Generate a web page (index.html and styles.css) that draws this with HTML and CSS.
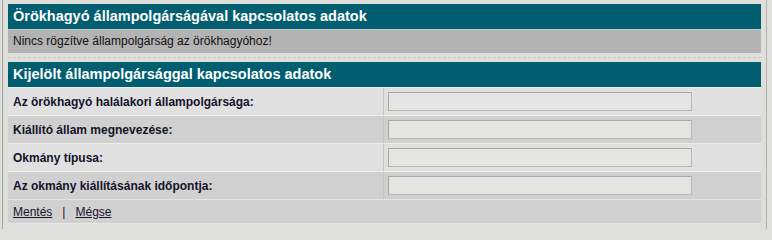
FILE: index.html
```html
<!DOCTYPE html>
<html lang="hu">
<head>
<meta charset="utf-8">
<title>Állampolgárság</title>
<link rel="stylesheet" href="styles.css">
</head>
<body>
<div class="frame">
  <div class="panel">
    <div class="head">Örökhagyó állampolgárságával kapcsolatos adatok</div>
    <div class="notice">Nincs rögzítve állampolgárság az örökhagyóhoz!</div>
  </div>
  <div class="sep"></div>
  <div class="panel">
    <div class="head">Kijelölt állampolgársággal kapcsolatos adatok</div>
    <div class="row light">
      <div class="label">Az örökhagyó halálakori állampolgársága:</div>
      <div class="field"><input type="text" class="inp"></div>
    </div>
    <div class="row dark">
      <div class="label">Kiállító állam megnevezése:</div>
      <div class="field"><input type="text" class="inp"></div>
    </div>
    <div class="row light">
      <div class="label">Okmány típusa:</div>
      <div class="field"><input type="text" class="inp"></div>
    </div>
    <div class="row dark">
      <div class="label">Az okmány kiállításának időpontja:</div>
      <div class="field"><input type="text" class="inp"></div>
    </div>
    <div class="footer">
      <a href="#" class="lnk">Mentés</a>
      <span class="bar">|</span>
      <a href="#" class="lnk">Mégse</a>
    </div>
  </div>
</div>
</body>
</html>
```
FILE: styles.css
```css
html, body {
  margin: 0;
  padding: 0;
  background: #dededa;
  font-family: "Liberation Sans", Arial, sans-serif;
  overflow: hidden;
}
.frame {
  margin-left: 2px;
  width: 765px;
  height: 229px;
  box-sizing: border-box;
  border-left: 1px solid #a4a4a0;
  border-right: 1px solid #b4b4b0;
  padding: 4px 5px 0 5px;
}
.panel {
  width: 753px;
}
.head {
  height: 25px;
  line-height: 25px;
  box-sizing: border-box;
  background: #005e70;
  color: #ffffff;
  font-weight: bold;
  font-size: 14.5px;
  padding-left: 5px;
}
.notice {
  height: 24px;
  line-height: 23px;
  box-sizing: border-box;
  background: #b3b3b3;
  border-top: 1px solid #c4ccca;
  color: #111111;
  font-size: 12px;
  padding-left: 5px;
}
.sep {
  height: 5px;
  margin-bottom: 4px;
  box-sizing: border-box;
  border-bottom: 1px dashed #c8c8c4;
}
.row {
  display: flex;
  height: 28px;
  box-sizing: border-box;
  border-top: 1px solid #ececea;
}
.light { background: #e0e0e0; }
.dark { background: #d0d0d0; }
.label {
  width: 376px;
  box-sizing: border-box;
  border-right: 1px solid #c6c6c0;
  padding-left: 5px;
  font-size: 12px;
  font-weight: bold;
  color: #14142a;
  display: flex;
  align-items: center;
}
.field {
  flex: 1;
  display: flex;
  align-items: center;
  padding-left: 4px;
}
.inp {
  width: 304px;
  height: 19px;
  box-sizing: border-box;
  margin: 0;
  background: #e4e4e0;
  border: 1px solid #a8a8a2;
  border-right-color: #b8b8b2;
  border-bottom-color: #b8b8b2;
  padding: 0 2px;
  font-family: "Liberation Sans", Arial, sans-serif;
  font-size: 12px;
}
.footer {
  height: 25px;
  box-sizing: border-box;
  border-top: 1px solid #e6e6e4;
  border-bottom: 1px solid #e6e6e4;
  background: #d0d0d0;
  display: flex;
  align-items: center;
  padding-left: 5px;
  font-size: 12px;
  color: #14142a;
}
.lnk {
  color: #14142a;
  text-decoration: underline;
}
.bar {
  margin: 0 10px;
}
```
